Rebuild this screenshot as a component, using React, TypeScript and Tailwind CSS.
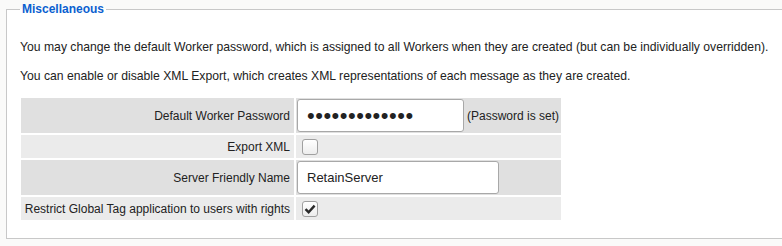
import { useState } from 'react'

const rows = [
	{ label: 'Default Worker Password', kind: 'password', tall: true },
	{ label: 'Export XML', kind: 'check', checked: false },
	{ label: 'Server Friendly Name', kind: 'text', tall: true },
	{ label: 'Restrict Global Tag application to users with rights', kind: 'check', checked: true }
]

function Checkbox({ initial }: { initial: boolean }) {
	const [on, setOn] = useState(initial)
	return (
		<button
			type="button"
			onClick={() => setOn(!on)}
			className="ml-[5px] flex h-4 w-4 items-center justify-center rounded-[3px] border border-[#a0a0a0] bg-gradient-to-b from-white to-[#ededed]"
		>
			{on && (
				<svg width="12" height="10" viewBox="0 0 12 10">
					<path d="M1.5 5.2 L4.6 8.2 L10.6 1.6" fill="none" stroke="#2a2a2a" strokeWidth="2.4" />
				</svg>
			)}
		</button>
	)
}

export default function App() {
	return (
		<main className="h-[246px] w-[782px] overflow-hidden bg-[#fafaf9] font-['Liberation_Sans',Arial,sans-serif] text-[12px] text-[#222]">
			<fieldset className="ml-[6px] w-[800px] border border-[#c8c8c8] bg-white pb-[16px] pl-[13px] pr-0">
				<legend className="px-[2px] text-[12px] font-bold leading-[18px] text-[#0b5fd0]">
					Miscellaneous
				</legend>
				<p className="mt-[21px] text-[12.2px] leading-4">
					You may change the default Worker password, which is assigned to all Workers when they are
					created (but can be individually overridden).
				</p>
				<p className="mt-[13px] text-[12.2px] leading-4">
					You can enable or disable XML Export, which creates XML representations of each message as
					they are created.
				</p>
				<table className="-ml-[1px] mt-[12px] border-separate border-spacing-[2px]">
					<tbody>
						{rows.map((row, i) => (
							<tr key={i} className={row.tall ? 'bg-[#e0e0e0]' : 'bg-[#ebebeb]'}>
								<td
									className={`w-[273px] pr-[4px] text-right ${row.tall ? 'h-[35px]' : 'h-[23px]'}`}
								>
									{row.label}
								</td>
								<td className="w-[265px] p-[1px]">
									{row.kind === 'password' && (
										<div className="flex items-center">
											<input
												type="password"
												defaultValue="secretpasswd1"
												className="h-[33px] w-[167px] rounded-[3px] border border-[#a8a8a8] bg-white pl-[9px] text-[22px] tracking-[0.5px] outline-none"
											/>
											<span className="ml-[3px]">(Password is set)</span>
										</div>
									)}
									{row.kind === 'text' && (
										<input
											type="text"
											defaultValue="RetainServer"
											className="h-[33px] w-[202px] rounded-[3px] border border-[#a8a8a8] bg-white pl-[9px] text-[13px] text-[#222] outline-none"
										/>
									)}
									{row.kind === 'check' && <Checkbox initial={!!row.checked} />}
								</td>
							</tr>
						))}
					</tbody>
				</table>
			</fieldset>
		</main>
	)
}
